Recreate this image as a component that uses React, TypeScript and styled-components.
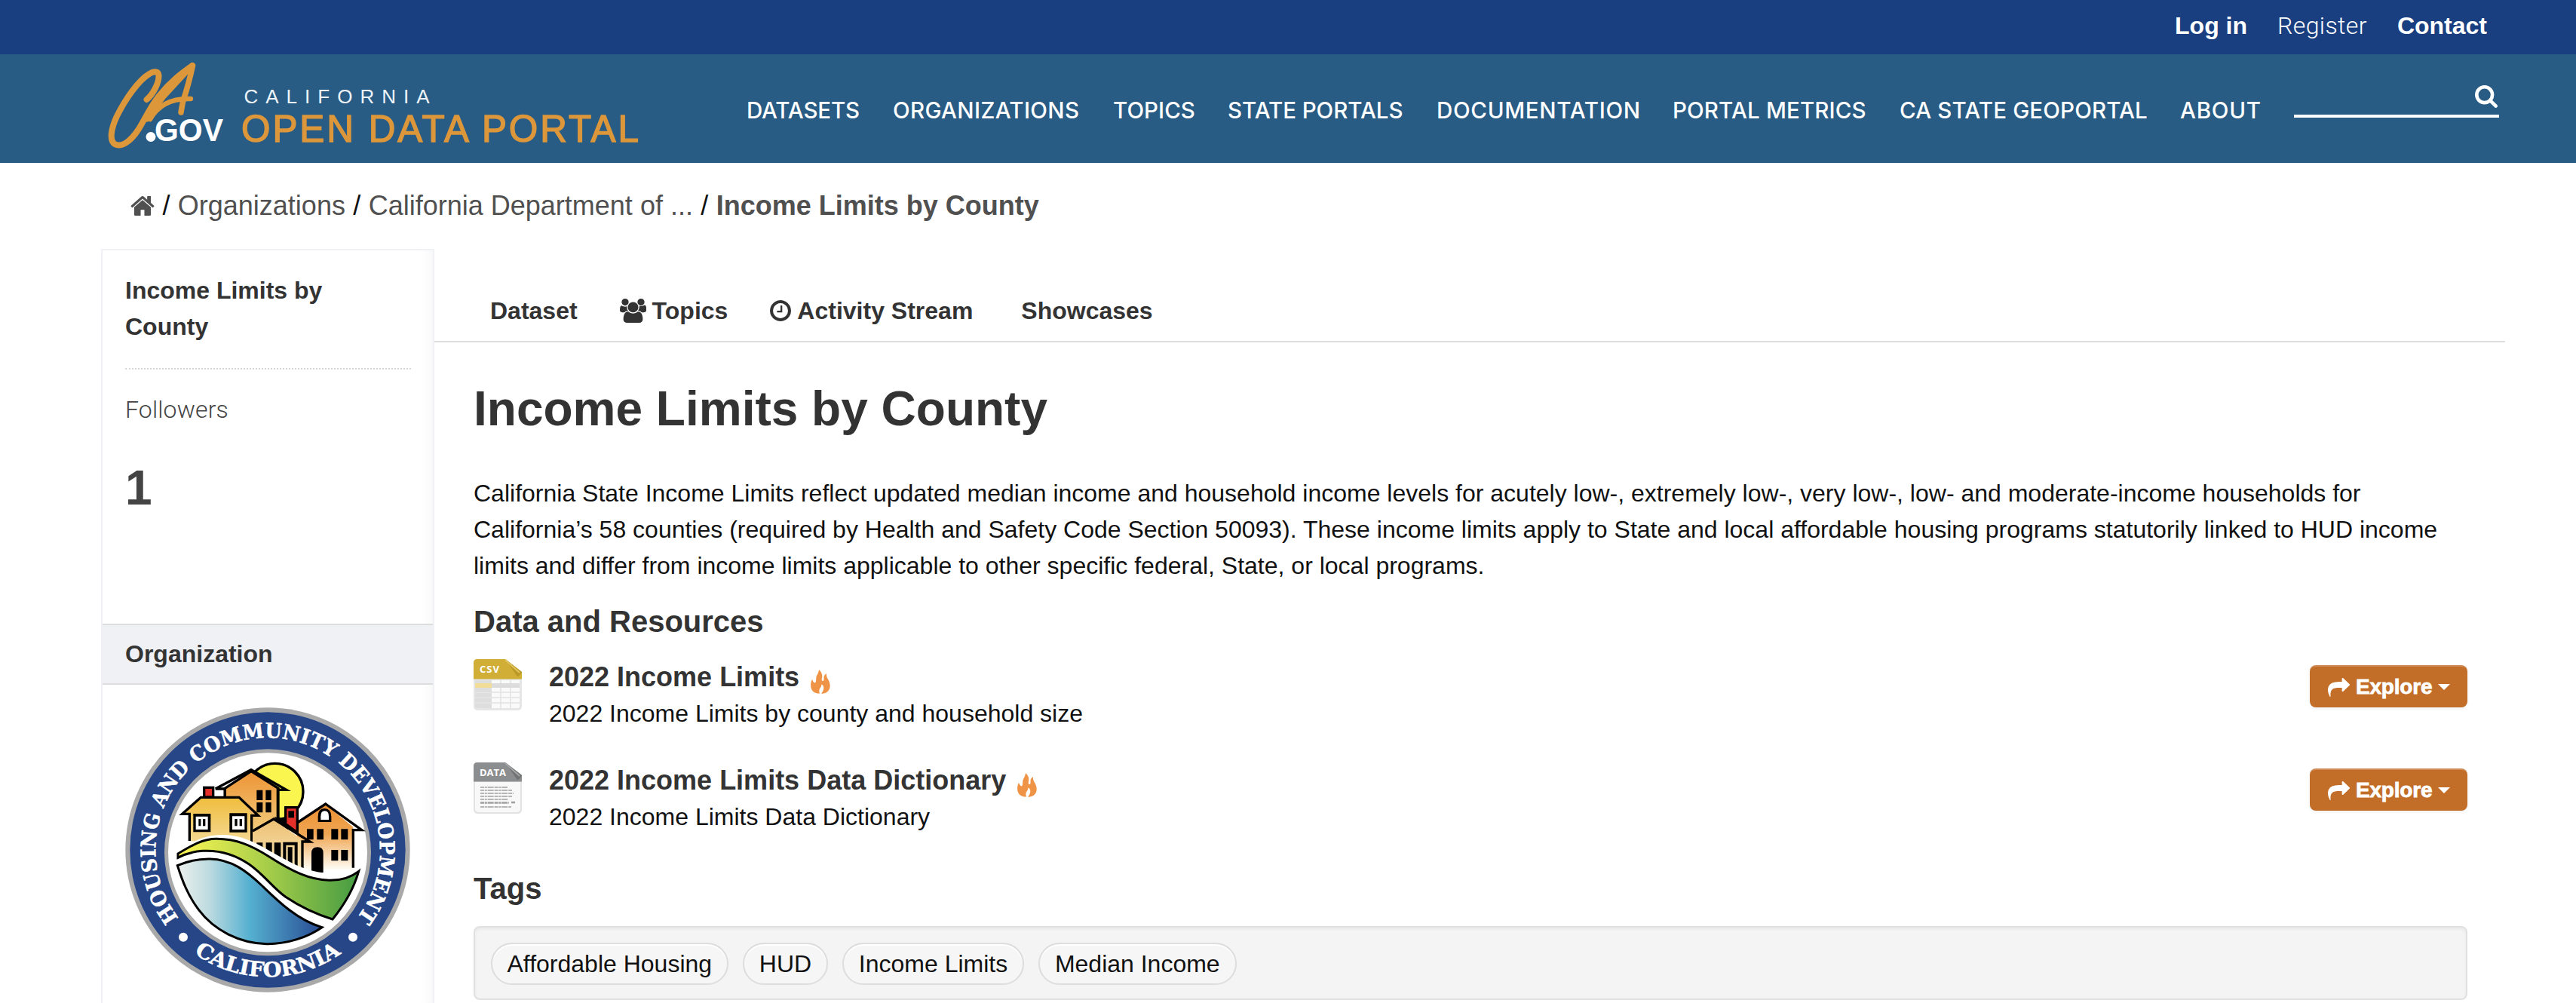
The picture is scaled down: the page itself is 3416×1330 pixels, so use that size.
import React from "react";
import styled, { createGlobalStyle } from "styled-components";

const sans = `"Liberation Sans", Arial, Helvetica, sans-serif`;

const GlobalStyle = createGlobalStyle`
  *, *::before, *::after { box-sizing: border-box; }
  html, body { margin: 0; padding: 0; }
  body {
    width: 3416px;
    height: 1330px;
    overflow: hidden;
    background: #fff;
    color: #111;
    font-family: ${sans};
    font-size: 32px;
    line-height: 48px;
  }
  h1, h2, h3, p, ul { margin: 0; padding: 0; }
  ul { list-style: none; }
  a { color: inherit; text-decoration: none; }
`;

/* ---------- icons ---------- */

const Glyph = styled.svg<{ $w: number; $h: number }>`
  display: block;
  flex: none;
  width: ${(p) => p.$w}px;
  height: ${(p) => p.$h}px;
  fill: currentColor;
`;

const icons = {
  home: {
    box: "64 253 1664 1283",
    d: "M1472 992v480q0 26-19 45t-45 19h-384v-384h-256v384h-384q-26 0-45-19t-19-45v-480q0-1 .5-3t.5-3l575-474 575 474q1 2 1 6zm223-69l-62 74q-8 9-21 11h-3q-13 0-21-7l-692-577-692 577q-12 8-24 7-13-2-21-11l-62-74q-8-10-7-23.5t11-21.5l719-599q32-26 76-26t76 26l244 204v-195q0-14 9-23t23-9h192q14 0 23 9t9 23v408l219 182q10 8 11 21.5t-7 23.5z",
  },
  search: {
    box: "64 128 1664 1664",
    d: "M1216 832q0-185-131.5-316.5t-316.5-131.5-316.5 131.5-131.5 316.5 131.5 316.5 316.5 131.5 316.5-131.5 131.5-316.5zm512 832q0 52-38 90t-90 38q-54 0-90-38l-343-342q-179 124-399 124-143 0-273.5-55.5t-225-150-150-225-55.5-273.5 55.5-273.5 150-225 225-150 273.5-55.5 273.5 55.5 225 150 150 225 55.5 273.5q0 220-124 399l343 343q37 37 37 90z",
  },
  clock: {
    box: "128 128 1536 1536",
    d: "M1024 544v448q0 14-9 23t-23 9h-320q-14 0-23-9t-9-23v-64q0-14 9-23t23-9h224v-352q0-14 9-23t23-9h64q14 0 23 9t9 23zm416 352q0-148-73-273t-198-198-273-73-273 73-198 198-73 273 73 273 198 198 273 73 273-73 198-198 73-273zm224 0q0 209-103 385.5t-279.5 279.5-385.5 103-385.5-103-279.5-279.5-103-385.5 103-385.5 279.5-279.5 385.5-103 385.5 103 279.5 279.5 103 385.5z",
  },
  group: {
    box: "0 0 1920 1792",
    d: "M593 896q-162 5-265 128h-134q-82 0-138-40.5t-56-118.5q0-353 124-353 6 0 43.5 21t97.5 42.5 119 21.5q67 0 133-23-5 37-5 66 0 159 93 293zm1071 637q0 120-73 189.5t-194 69.5h-874q-121 0-194-69.5t-73-189.5q0-53 3.5-103.5t14-109 26.5-108.5 43-97.5 62-81 85.5-53.5 111.5-20q10 0 43 21.5t73 48 107 48 135 21.5 135-21.5 107-48 73-48 43-21.5q61 0 111.5 20t85.5 53.5 62 81 43 97.5 26.5 108.5 14 109 3.5 103.5zm-1024-1277q0 106-75 181t-181 75-181-75-75-181 75-181 181-75 181 75 75 181zm704 384q0 159-112.5 271.5t-271.5 112.5-271.5-112.5-112.5-271.5 112.5-271.5 271.5-112.5 271.5 112.5 112.5 271.5zm576 225q0 78-56 118.5t-138 40.5h-134q-103-123-265-128 93-134 93-293 0-29-5-66 66 23 133 23 59 0 119-21.5t97.5-42.5 43.5-21q124 0 124 353zm-128-609q0 106-75 181t-181 75-181-75-75-181 75-181 181-75 181 75 75 181z",
  },
  share: {
    box: "0 64 1792 1600",
    d: "M1792 640q0 26-19 45l-512 512q-19 19-45 19t-45-19-19-45v-256h-224q-98 0-175.5 6t-154 21.5-133 42.5-105.5 69.5-80 101-48.5 138.5-17.5 181q0 55 5 123 0 6 2.5 23.5t2.5 26.5q0 15-8.5 25t-23.5 10q-16 0-28-17-7-9-13-22t-13.5-30-10.5-24q-127-285-127-451 0-199 53-333 162-403 875-403h224v-256q0-26 19-45t45-19 45 19l512 512q19 19 19 45z",
  },
  flame: {
    box: "0 0 26 32",
    d: "M11 0C14 3 16 6 15 11C14.300 14 15 15.500 16.500 15C18 14.500 17.500 12 17.500 10C17.600 8 19 6 21 5C20.500 9 22 11 23.500 13.500C26.500 19 26.500 25 23 28.500C20.500 31 17 32 14 31.700C16.500 29 17.800 26 17 22.500C16.600 20.500 15 19.500 14 19.800C14.500 21.500 14 22.500 12.800 24C11 26.500 11 29 12 31.500C6.500 32 2.500 29.500 .8 25C-.6 20.500 .3 16 2 12.800C3 15.500 4 17.500 5.500 17.500C7.500 17.300 7 14 7.300 11C7.800 7 10.800 4.500 11 0Z",
  },
} as const;

function Icon({ name, w, h }: { name: keyof typeof icons; w: number; h: number }) {
  return (
    <Glyph $w={w} $h={h} viewBox={icons[name].box} preserveAspectRatio="none" aria-hidden="true">
      <path d={icons[name].d} />
    </Glyph>
  );
}

/* ---------- header ---------- */

const AccountBar = styled.div`
  display: flex;
  justify-content: flex-end;
  align-items: center;
  gap: 40px;
  height: 72px;
  padding: 0 118px 4px 0;
  background: #1a3f80;
  color: #fff;
`;

const AccountLink = styled.a<{ $light?: boolean }>`
  font-weight: ${(p) => (p.$light ? 300 : 700)};
  font-family: ${(p) => (p.$light ? `Roboto, ${sans}` : sans)};
  letter-spacing: ${(p) => (p.$light ? "0.4px" : "0")};
`;

const Masthead = styled.header`
  display: flex;
  align-items: flex-start;
  height: 144px;
  background: #285c85;
  color: #fff;
`;

const LogoSvg = styled.svg`
  display: block;
  flex: none;
  width: 710px;
  height: 124px;
  margin: 8px 0 0 143px;
`;

function PortalLogo() {
  return (
    <LogoSvg viewBox="0 0 710 124">
      <g fill="none" stroke="#dd973b" strokeLinecap="round" strokeLinejoin="round">
        <path strokeWidth="8" d="M51.500 52C60 45 68 30 67.500 20C67 14 61 14 55 18C40 27 23 52 12 74C4 91 2 106 9 111C18 116 30 108 41 91C49 78 56 62 68 47C84 27 98 17 112 7" />
        <path strokeWidth="7.500" d="M112.500 7C109 24 104 41 99.500 55C98.500 61 97.500 65 97 69" />
        <path strokeWidth="6.500" d="M56 78C67 59 84 50 110 51" />
        <path strokeWidth="7" d="M52 78L74 48L112 7" />
      </g>
      <circle cx="57" cy="101.500" r="6.500" fill="#fff" />
      <text x="62" y="107" fontFamily="Liberation Sans, Arial, sans-serif" fontWeight="700" fontSize="42" fill="#fff" textLength="91" lengthAdjust="spacingAndGlyphs">GOV</text>
      <text x="180.500" y="57" fontFamily="Liberation Sans, Arial, sans-serif" fontSize="26" fill="#eef3f7" textLength="246">CALIFORNIA</text>
      <text x="177" y="108" fontFamily="Liberation Sans, Arial, sans-serif" fontSize="49.500" fill="#dd973b" stroke="#dd973b" strokeWidth="1.400" textLength="527">OPEN DATA PORTAL</text>
    </LogoSvg>
  );
}

const Nav = styled.nav`
  display: flex;
  flex: none;
  margin: 50px 0 0 137px;
`;

const NavLink = styled.a<{ $w: number; $track: number }>`
  width: ${(p) => p.$w}px;
  font-family: Inter, ${sans};
  font-size: 29.5px;
  font-weight: 500;
  letter-spacing: ${(p) => p.$track}px;
  white-space: nowrap;
`;

const SearchField = styled.div`
  display: flex;
  justify-content: flex-end;
  width: 272px;
  height: 46px;
  margin: 38px 0 0 0;
  padding: 3px 2px 0 0;
  border-bottom: 4px solid #fff;
`;

const navItems = [
  { label: "DATASETS", w: 194, track: -0.15 },
  { label: "ORGANIZATIONS", w: 292, track: 0.35 },
  { label: "TOPICS", w: 152, track: 0.05 },
  { label: "STATE PORTALS", w: 277, track: -0.05 },
  { label: "DOCUMENTATION", w: 313, track: 0.7 },
  { label: "PORTAL METRICS", w: 301, track: 0.15 },
  { label: "CA STATE GEOPORTAL", w: 372, track: 0.15 },
  { label: "ABOUT", w: 151, track: 0.75 },
];

/* ---------- breadcrumb ---------- */

const Breadcrumb = styled.nav`
  display: flex;
  align-items: center;
  gap: 10.4px;
  height: 114px;
  padding: 0 0 0 173px;
  color: #505050;
  font-size: 36px;
  line-height: 54px;
`;

const Slash = styled.span`
  color: #111;
`;

const Current = styled.a`
  font-weight: 700;
`;

/* ---------- page columns ---------- */

const Columns = styled.div`
  display: flex;
  height: 1000px;
  padding: 0 94px 0 134px;
`;

const Sidebar = styled.aside`
  display: flex;
  flex-direction: column;
  flex: none;
  width: 442px;
  border: 2px solid #eff1f5;
  border-bottom: 0;
  box-shadow: inset -16px 0 16px -12px rgba(0, 0, 0, 0.04);
`;

const FollowPanel = styled.section`
  height: 495px;
  padding: 29px 29px 0 30px;
`;

const SideTitle = styled.h2`
  width: 300px;
  height: 127px;
  color: #333;
  font-size: 32px;
  line-height: 48px;
`;

const Followers = styled.div`
  border-top: 2px dotted #d8d8d8;
  padding-top: 29px;
  color: #444;
  font-family: Roboto, ${sans};
  font-weight: 300;
  letter-spacing: 0.15px;
`;

const FollowerCount = styled.div`
  margin-top: 32px;
  color: #444;
  font-size: 64px;
  font-weight: 700;
  line-height: 96px;
`;

const SideHeading = styled.h2`
  height: 81px;
  padding: 14px 30px;
  border: solid #ddd;
  border-width: 2px 0;
  background: #eff1f5;
  color: #333;
  font-size: 32px;
  line-height: 48px;
`;

const SealSvg = styled.svg`
  display: block;
  width: 378px;
  height: 378px;
  margin: 30px 0 0 30px;
`;

function Seal() {
  return (
    <SealSvg viewBox="77 114 1134 1134">
      <defs>
        <linearGradient id="roofA" x1="0" y1="0" x2="0" y2="1"><stop offset="0" stopColor="#ed9335" /><stop offset="1" stopColor="#f2cd7d" /></linearGradient>
        <linearGradient id="wallB" x1="0" y1="0" x2="0" y2="1"><stop offset="0" stopColor="#f0bd3c" /><stop offset="1" stopColor="#f5db9c" /></linearGradient>
        <linearGradient id="wallC" x1="0" y1="0" x2="0" y2="1"><stop offset="0" stopColor="#edc073" /><stop offset="1" stopColor="#f8e3b4" /></linearGradient>
        <linearGradient id="wallD" x1="0" y1="0" x2="0" y2="1"><stop offset="0" stopColor="#ec8f31" /><stop offset=".45" stopColor="#efa653" /><stop offset="1" stopColor="#fffdf5" /></linearGradient>
        <linearGradient id="hill" x1="0" y1="0" x2="1" y2="0"><stop offset="0" stopColor="#fbf451" /><stop offset=".15" stopColor="#e3ea50" /><stop offset=".5" stopColor="#a5cd49" /><stop offset="1" stopColor="#459b43" /></linearGradient>
        <linearGradient id="sea" x1="0" y1="0" x2="1" y2="0"><stop offset="0" stopColor="#eef1ee" /><stop offset=".22" stopColor="#bddbe0" /><stop offset=".5" stopColor="#55b0d0" /><stop offset="1" stopColor="#284b93" /></linearGradient>
        <path id="arcTop" d="M290.200 952.500A446 446 0 1 1 997.800 952.500" />
        <path id="arcBottom" d="M350.700 1092.100A505 505 0 0 0 937.300 1092.100" />
      </defs>
      <circle cx="644" cy="681" r="566" fill="#a9a9a9" />
      <circle cx="644" cy="681" r="548" fill="#264687" />
      <circle cx="644" cy="691" r="411" fill="#a9a9a9" />
      <circle cx="644" cy="691" r="396" fill="#fff" />
      <g fill="#fff" stroke="#fff" strokeWidth="1.500" fontFamily="DejaVu Serif, serif" fontWeight="700" fontSize="82">
        <text textLength="1983" lengthAdjust="spacingAndGlyphs"><textPath href="#arcTop" textLength="1983" lengthAdjust="spacingAndGlyphs">HOUSING AND COMMUNITY DEVELOPMENT</textPath></text>
        <text textLength="625" lengthAdjust="spacingAndGlyphs"><textPath href="#arcBottom" textLength="625" lengthAdjust="spacingAndGlyphs">CALIFORNIA</textPath></text>
      </g>
      <circle cx="308" cy="1028" r="18" fill="#fff" />
      <circle cx="983" cy="1028" r="18" fill="#fff" />

      <g stroke="#000" strokeWidth="10">
        <circle cx="673" cy="449" r="112" fill="#faf54f" />
        {/* tall house */}
        <path d="M474 436L578 368L686 436V610H474Z" fill="url(#roofA)" />
        <path d="M436 438L578 362L718 442H688M436 438H474V480" fill="none" />
        <path d="M684 438V600" />
        <path d="M680 556L712 560L760 600L700 590Z" fill="#000" />
        {/* right house */}
        <path d="M760 570L874 500L984 590V760H760Z" fill="url(#wallD)" stroke="none" />
        <path d="M757 576L874 498L1018 602H984V752" fill="none" />
        <path d="M715 512H762V612L715 578Z" fill="#e5302a" />
        <rect x="731" y="531" width="13" height="17" />
        {/* left house */}
        <rect x="391" y="433" width="36" height="38" fill="#e5302a" />
        <path d="M378 472H530L582 540V670L333 645V538H310Z" fill="url(#wallB)" stroke="none" />
        <path d="M333 645V538H304L378 472H530L606 544H580V660" fill="none" />
        {/* middle house */}
        <path d="M584 606L668 560L780 640V755L584 680Z" fill="url(#wallC)" stroke="none" />
        <path d="M584 606L668 558L812 648H782V755" fill="none" />
      </g>
      <g fill="#000">
        <path d="M600 443h24v40h-24zM636 443h22v40h-22zM600 492h24v40h-24zM636 492h22v40h-22z" />
        <path d="M800 598h26v42h-26zM840 598h26v42h-26zM897 598h27v42h-27zM936 598h27v42h-27zM897 681h27v43h-27zM936 681h27v43h-27z" />
        <path d="M818 772V694q0-24 24-24t23 24v78z" />
        <path d="M600 652h24v36h-24zM637 652h24v50h-24zM670 652h26v70h-26zM705 650h58v105h-12V662h-34v70h-12zM724 670h18v75h-18z" />
        <path d="M348 537h69v73h-69zM492 535h70v76h-70z" />
        <path d="M844 570v-22q0-32 26-32t27 32v22z" />
      </g>
      <g fill="#fff">
        <path d="M358 548h48v52h-48zM503 547h49v53h-49z" />
        <path d="M855 561v-14q0-21 16-21t16 21v14z" />
      </g>
      <path d="M369 558h9v28h-9zM386 558h10v28h-10zM513 558h10v28h-10zM532 558h10v28h-10z" fill="#000" />
      <path d="M270 700C330 650 400 618 470 621C560 624 620 668 700 712C790 762 880 800 1012 752L1010 830L260 790Z" fill="#fff" />
      <path d="M287 696C340 664 385 637 440 637C520 637 580 663 650 708C740 766 810 800 888 802C940 803 975 790 1006 766C985 840 940 910 902 957C830 935 770 905 715 868C660 828 630 780 570 738C510 697 450 681 385 685C345 688 315 697 287 712Z" fill="url(#hill)" stroke="#000" strokeWidth="9" />
      <path d="M285 743C330 724 370 716 415 717C500 719 560 765 620 822C680 880 760 960 860 989C800 1030 720 1056 640 1055C530 1052 430 1000 370 920C325 860 305 805 285 743Z" fill="url(#sea)" stroke="#000" strokeWidth="9" />
    </SealSvg>
  );
}

/* ---------- main column ---------- */

const Main = styled.main`
  display: flex;
  flex-direction: column;
  flex: 1;
`;

const Tabs = styled.ul`
  display: flex;
  align-items: flex-start;
  gap: 56px;
  height: 124px;
  padding: 58px 0 0 74px;
  border-bottom: 2px solid #ddd;
  color: #333;
  font-weight: 700;
`;

const Tab = styled.li<{ $indent?: number }>`
  display: flex;
  align-items: center;
  gap: 8px;
  margin-left: ${(p) => p.$indent ?? 0}px;
`;

const Article = styled.article`
  display: flex;
  flex-direction: column;
  padding: 40px 50px 0 52px;
`;

const Title = styled.h1`
  margin-bottom: 40px;
  color: #333;
  font-size: 64px;
  line-height: 96px;
`;

const Section = styled.h2<{ $gap: number }>`
  margin-bottom: ${(p) => p.$gap}px;
  color: #333;
  font-size: 40px;
  line-height: 60px;
`;

const Description = styled.p`
  width: 2640px;
  margin-bottom: 20px;
`;

const Line = styled.span`
  display: block;
  white-space: nowrap;
`;

const Resource = styled.li`
  display: flex;
  align-items: flex-start;
  height: 137px;
`;

const ResourceBody = styled.div`
  flex: 1;
  margin-left: 36px;
`;

const ResourceTitle = styled.h3`
  display: flex;
  gap: 15px;
  color: #333;
  font-size: 36px;
  line-height: 48px;
`;

const Hot = styled.span`
  display: flex;
  padding-top: 14px;
  color: #ef9346;
`;

const Explore = styled.button`
  display: flex;
  align-items: center;
  gap: 8px;
  width: 209px;
  height: 56px;
  margin-top: 8px;
  padding: 0 24px;
  border: 0;
  border-top: 2px solid #ce8b55;
  border-radius: 8px;
  background: #c26e28;
  box-shadow: 0 2px 4px rgba(0, 0, 0, 0.06);
  color: #fff;
  font: 700 28px/40px ${sans};
  letter-spacing: -0.2px;
  -webkit-text-stroke: 0.8px #fff;
`;

const Caret = styled.span`
  border: solid transparent;
  border-width: 8px 8px 0;
  border-top-color: #fff;
`;

const FileSvg = styled.svg`
  display: block;
  flex: none;
  width: 64px;
  height: 68px;
`;

const sheetOutline = "M5 0H42L64 17V62Q64 68 58 68H6Q0 68 0 62V5Q0 0 5 0Z";

function CsvFile() {
  return (
    <FileSvg viewBox="0 0 64 68">
      <path d={sheetOutline} fill="#e6e6e6" />
      <path d="M24 28H61V62Q61 65 58 65H24Z" fill="#fafafa" />
      <path d="M2 28H24V65H5Q2 65 2 62Z" fill="#dedede" />
      <path d="M24 35H61M24 44H61M24 51H61M24 58H61M36 28V65M49 28V65" stroke="#e2e2e2" strokeWidth="1.500" />
      <path d="M2 44.500H24M2 51H24M2 58H24" stroke="#e8e8e8" />
      <path d="M24 32H61V38H24Z" fill="#dcdcdc" />
      <path d="M2 32H24V38H2Z" fill="#f1dc98" />
      <path d="M5 0H42L64 17V26.500H0V5Q0 0 5 0Z" fill="#d1ae35" />
      <path d="M42 0L64 17Q62 22 58 23Q51 13 42 0Z" fill="#bb9926" />
      <path d="M42 1L61 18" stroke="#e0c35d" strokeWidth="2" />
      <text x="8" y="18" fontFamily="Open Sans, sans-serif" fontWeight="700" fontSize="13" fill="#fff" textLength="26">CSV</text>
    </FileSvg>
  );
}

function DataFile() {
  return (
    <FileSvg viewBox="0 0 64 68">
      <path d={sheetOutline} fill="#e2e2e2" />
      <path d="M2 26H62V61Q62 66 57 66H7Q2 66 2 61Z" fill="#f8f8f8" />
      <path d="M5 0H42L64 17V25.500H0V5Q0 0 5 0Z" fill="#8b8d8e" />
      <path d="M42 0L64 17Q62 22 58 23Q51 13 42 0Z" fill="#707274" />
      <path d="M42 1L61 18" stroke="#a3a5a6" strokeWidth="2" />
      <text x="8" y="18" fontFamily="Open Sans, sans-serif" fontWeight="700" fontSize="13" fill="#fff" textLength="35">DATA</text>
      <g stroke="#a0a0a0" strokeWidth="1.700" strokeDasharray="5 .8 3 .8 8 1">
        <path d="M9 33H45M9 37H51M9 41H53M9 45H51M9 49H46M9 59H50" />
        <path d="M9 53.500H47M50 53H55" strokeWidth="2.400" />
      </g>
    </FileSvg>
  );
}

const resources = [
  { icon: <CsvFile />, title: "2022 Income Limits", text: "2022 Income Limits by county and household size" },
  { icon: <DataFile />, title: "2022 Income Limits Data Dictionary", text: "2022 Income Limits Data Dictionary" },
];

const TagWell = styled.ul`
  display: flex;
  align-items: flex-start;
  gap: 18.700px;
  height: 98px;
  padding: 20px 20.500px;
  border: 2px solid #e1e1e1;
  border-radius: 8px;
  background: #f4f4f4;
  box-shadow: inset 0 2px 4px rgba(0, 0, 0, 0.05);
`;

const Tag = styled.li`
  height: 56px;
  padding: 2px 20px;
  border: 2px solid #ddd;
  border-radius: 28px;
  background: #f6f6f6;
  box-shadow: inset 0 2px 0 #fff;
`;

export default function App() {
  return (
    <>
      <GlobalStyle />
      <AccountBar>
        <AccountLink href="#">Log in</AccountLink>
        <AccountLink href="#" $light>Register</AccountLink>
        <AccountLink href="#">Contact</AccountLink>
      </AccountBar>
      <Masthead>
        <PortalLogo />
        <Nav>
          {navItems.map((n) => (
            <NavLink key={n.label} href="#" $w={n.w} $track={n.track}>{n.label}</NavLink>
          ))}
        </Nav>
        <SearchField><Icon name="search" w={30} h={30} /></SearchField>
      </Masthead>
      <Breadcrumb>
        <Icon name="home" w={32} h={26} />
        <Slash>/</Slash>
        <a href="#">Organizations</a>
        <Slash>/</Slash>
        <a href="#">California Department of ...</a>
        <Slash>/</Slash>
        <Current href="#">Income Limits by County</Current>
      </Breadcrumb>
      <Columns>
        <Sidebar>
          <FollowPanel>
            <SideTitle>Income Limits by County</SideTitle>
            <Followers>Followers</Followers>
            <FollowerCount>1</FollowerCount>
          </FollowPanel>
          <SideHeading>Organization</SideHeading>
          <Seal />
        </Sidebar>
        <Main>
          <Tabs>
            <Tab>Dataset</Tab>
            <Tab><Icon name="group" w={35} h={32} />Topics</Tab>
            <Tab><Icon name="clock" w={28} h={28} />Activity Stream</Tab>
            <Tab $indent={8}>Showcases</Tab>
          </Tabs>
          <Article>
            <Title>Income Limits by County</Title>
            <Description>
              <Line>California State Income Limits reflect updated median income and household income levels for acutely low-, extremely low-, very low-, low- and moderate-income households for</Line>
              <Line>California’s 58 counties (required by Health and Safety Code Section 50093). These income limits apply to State and local affordable housing programs statutorily linked to HUD income</Line>
              <Line>limits and differ from income limits applicable to other specific federal, State, or local programs.</Line>
            </Description>
            <Section $gap={20}>Data and Resources</Section>
            <ul>
              {resources.map((r) => (
                <Resource key={r.title}>
                  {r.icon}
                  <ResourceBody>
                    <ResourceTitle>
                      {r.title}
                      <Hot><Icon name="flame" w={26} h={32} /></Hot>
                    </ResourceTitle>
                    <p>{r.text}</p>
                  </ResourceBody>
                  <Explore><Icon name="share" w={29} h={25} />Explore<Caret /></Explore>
                </Resource>
              ))}
            </ul>
            <Section $gap={20}>Tags</Section>
            <TagWell>
              <Tag>Affordable Housing</Tag>
              <Tag>HUD</Tag>
              <Tag>Income Limits</Tag>
              <Tag>Median Income</Tag>
            </TagWell>
          </Article>
        </Main>
      </Columns>
    </>
  );
}
